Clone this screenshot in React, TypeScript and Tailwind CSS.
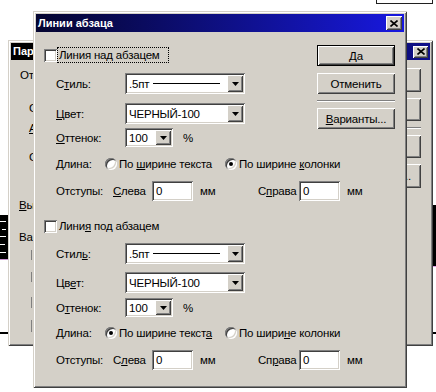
import React from 'react';

const raised =
  'bg-[#d4d0c8] shadow-[inset_1px_1px_#ffffff,inset_-1px_-1px_#404040,inset_2px_2px_#d4d0c8,inset_-2px_-2px_#808080]';
const sunken =
  'bg-white shadow-[inset_1px_1px_#808080,inset_-1px_-1px_#ffffff,inset_2px_2px_#404040,inset_-2px_-2px_#d4d0c8]';
const frame =
  'bg-[#d4d0c8] shadow-[inset_1px_1px_#d4d0c8,inset_-1px_-1px_#404040,inset_2px_2px_#ffffff,inset_-2px_-2px_#808080]';

function U({ children }: { children: React.ReactNode }) {
  return <span className="underline underline-offset-1 decoration-1">{children}</span>;
}

function Arrow() {
  return (
    <svg width="7" height="4" viewBox="0 0 7 4">
      <path d="M0 0h7L3.5 4z" fill="#000" />
    </svg>
  );
}

function CloseBtn({ size }: { size: string }) {
  return (
    <div className={`${size} shrink-0 flex items-center justify-center ${raised}`}>
      <svg width="8" height="7" viewBox="0 0 8 7">
        <path d="M0.5 0.5l7 6M7.5 0.5l-7 6" stroke="#000" strokeWidth="1.6" />
      </svg>
    </div>
  );
}

function Combo({ width, children }: { width: string; children: React.ReactNode }) {
  return (
    <div className={`${width} shrink-0 h-full flex items-stretch p-[2px] ${sunken}`}>
      <div className="flex-1 flex items-center pl-[2px] overflow-hidden whitespace-nowrap">{children}</div>
      <div className={`w-[16px] flex items-center justify-center ${raised}`}>
        <Arrow />
      </div>
    </div>
  );
}

function Radio({ on }: { on: boolean }) {
  return (
    <div className={`w-[12px] h-[12px] shrink-0 rounded-full flex items-center justify-center ${sunken}`}>
      {on && <div className="w-[4px] h-[4px] rounded-full bg-black" />}
    </div>
  );
}

function Field({ value }: { value: string }) {
  return (
    <div className={`w-[41px] h-[20px] shrink-0 flex items-center pl-[4px] ${sunken}`}>{value}</div>
  );
}

type SectionProps = {
  check: React.ReactNode;
  focus?: boolean;
  style: React.ReactNode;
  color: React.ReactNode;
  shade: React.ReactNode;
  opt1: React.ReactNode;
  opt2: React.ReactNode;
  first: boolean;
  left: React.ReactNode;
  right: React.ReactNode;
  gaps: string[];
};

function Section(p: SectionProps) {
  return (
    <>
      <div className={`${p.gaps[0]} h-[20px] flex items-center pl-[8px]`}>
        <div className={`w-[13px] h-[13px] shrink-0 ${sunken}`} />
        <div
          className={`h-[16px] w-[112px] shrink-0 flex items-center pl-[1px] border ${
            p.focus ? 'border-dotted border-black' : 'border-transparent'
          }`}
        >
          <span className="whitespace-nowrap">{p.check}</span>
        </div>
      </div>
      <div className={`${p.gaps[1]} h-[21px] flex items-center pl-[20px]`}>
        <span className="w-[69px] shrink-0">{p.style}</span>
        <Combo width="w-[120px]">
          <span>.5пт</span>
          <span className="ml-[4px] w-[67px] h-px bg-black" />
        </Combo>
      </div>
      <div className={`${p.gaps[2]} h-[21px] flex items-center pl-[20px]`}>
        <span className="w-[69px] shrink-0">{p.color}</span>
        <Combo width="w-[120px]">ЧЕРНЫЙ-100</Combo>
      </div>
      <div className={`${p.gaps[3]} h-[19px] flex items-center pl-[20px]`}>
        <span className="w-[69px] shrink-0">{p.shade}</span>
        <Combo width="w-[48px]">100</Combo>
        <span className="ml-[10px]">%</span>
      </div>
      <div className={`${p.gaps[4]} h-[14px] flex items-center pl-[20px] whitespace-nowrap`}>
        <span className="w-[49px] shrink-0">Длина:</span>
        <div className="w-[120px] shrink-0 flex items-center gap-[2px]">
          <Radio on={p.first} />
          <span>{p.opt1}</span>
        </div>
        <div className="flex items-center gap-[2px] shrink-0">
          <Radio on={!p.first} />
          <span>{p.opt2}</span>
        </div>
      </div>
      <div className={`${p.gaps[5]} h-[20px] flex items-center pl-[20px] whitespace-nowrap`}>
        <span className="w-[57px] shrink-0">Отступы:</span>
        <span className="w-[39px] shrink-0">{p.left}</span>
        <Field value="0" />
        <span className="w-[65px] shrink-0 pl-[7px]">мм</span>
        <span className="w-[41px] shrink-0">{p.right}</span>
        <Field value="0" />
        <span className="pl-[7px]">мм</span>
      </div>
    </>
  );
}

function FrontDialog() {
  return (
    <div className={`absolute left-[33px] top-[11px] w-[374px] h-[377px] p-[3px] flex flex-col ${frame}`}>
      <div className="h-[18px] flex items-center justify-between px-[2px] bg-linear-to-r from-[#050530] to-[#1818e0]">
        <span className="text-white font-bold text-[11px] tracking-normal leading-none">Линии абзаца</span>
        <CloseBtn size="w-[16px] h-[14px]" />
      </div>
      <div className="flex-1 flex">
        <div className="w-[281px] shrink-0 flex flex-col">
          <Section
            check="Линия над абзацем"
            focus
            style={<>С<U>т</U>иль:</>}
            color={<><U>Ц</U>вет:</>}
            shade={<><U>О</U>ттенок:</>}
            opt1={<>По <U>ш</U>ирине текста</>}
            opt2={<>По ширине <U>к</U>олонки</>}
            first={false}
            left={<><U>С</U>лева</>}
            right={<>С<U>п</U>рава</>}
            gaps={['mt-[13px]', 'mt-[8px]', 'mt-[9px]', 'mt-[4px]', 'mt-[10px]', 'mt-[10px]']}
          />
          <Section
            check={<>Лини<U>я</U> под абзацем</>}
            style={<>Стил<U>ь</U>:</>}
            color={<>Цв<U>е</U>т:</>}
            shade={<>О<U>т</U>тенок:</>}
            opt1={<>По ширине текст<U>а</U></>}
            opt2={<>По шири<U>н</U>е колонки</>}
            first
            left={<>С<U>л</U>ева</>}
            right={<>Сп<U>р</U>ава</>}
            gaps={['mt-[15px]', 'mt-[7px]', 'mt-[8px]', 'mt-[5px]', 'mt-[9px]', 'mt-[10px]']}
          />
        </div>
        <div className="w-[78px] shrink-0 flex flex-col">
          <div className={`mt-[13px] h-[21px] border border-black flex items-center justify-center ${raised}`}>Да</div>
          <div className={`mt-[7px] h-[21px] flex items-center justify-center ${raised}`}>Отменить</div>
          <div className="mt-[6px] h-[2px] border-t border-t-[#808080] border-b border-b-white" />
          <div className={`mt-[6px] h-[21px] flex items-center justify-center ${raised}`}>
            <span><U>В</U>арианты...</span>
          </div>
        </div>
      </div>
    </div>
  );
}

function BackDialog() {
  return (
    <div className={`absolute left-[8px] top-[40px] w-[425px] h-[306px] p-[3px] flex flex-col ${frame}`}>
      <div className="h-[17px] flex items-center justify-between px-[2px] bg-linear-to-r from-[#000000] to-[#10108a]">
        <span className="text-white font-bold text-[11px] tracking-normal leading-none">Параметры абзаца</span>
        <CloseBtn size="w-[15px] h-[12px]" />
      </div>
      <div className="flex-1 flex">
        <div className="flex-1 flex flex-col leading-[14px]">
          <span className="mt-[8px] ml-[9px]">Отступ слева:</span>
          <span className="mt-[19px] ml-[18px]">Справа:</span>
          <span className="mt-[6px] ml-[18px]"><U>А</U>бзац:</span>
          <span className="mt-[15px] ml-[18px]">Сверху:</span>
          <span className="mt-[34px] ml-[8px]"><U>В</U>ыключка:</span>
          <span className="mt-[18px] ml-[8px]">Варианты:</span>
          <div className="mt-[6px] ml-[20px] w-px h-[10px] bg-[#808080]" />
          <div className="mt-[12px] ml-[20px] w-px h-[10px] bg-[#808080]" />
          <div className="mt-[15px] ml-[20px] w-px h-[11px] bg-[#808080]" />
          <div className="mt-[12px] ml-[20px] w-px h-[12px] bg-[#808080]" />
        </div>
        <div className="w-[78px] mr-[9px] shrink-0 flex flex-col">
          <div className={`mt-[8px] h-[24px] ${raised}`} />
          <div className={`mt-[6px] h-[23px] ${raised}`} />
          <div className="mt-[6px] h-[2px] border-t border-t-[#808080] border-b border-b-white" />
          <div className={`mt-[6px] h-[23px] ${raised}`} />
          <div className={`mt-[6px] h-[24px] flex items-center justify-end pr-[10px] ${raised}`}>Табуляция...</div>
        </div>
      </div>
    </div>
  );
}

export default function App() {
  return (
    <div className="relative w-[436px] h-[392px] overflow-hidden bg-white font-['Liberation_Sans',Arial,sans-serif] text-[11.5px] tracking-[-0.2px] leading-[14px] text-black select-none">
      {/* document behind the dialogs */}
      <div className="absolute left-[376px] top-[-3px] w-[57px] h-[7px] border border-[#202020] bg-white" />
      <div className="absolute left-0 top-[215px] w-[8px] h-[44px] bg-black flex flex-col justify-around py-[3px]">
        <div className="h-px w-[6px] bg-white" />
        <div className="h-px w-[4px] ml-[2px] bg-white" />
        <div className="h-px w-[6px] bg-white" />
        <div className="h-px w-[5px] bg-white" />
        <div className="h-px w-[6px] bg-white" />
      </div>
      <div className="absolute left-0 top-[259px] w-[8px] h-px bg-[#c890d0]" />
      <div className="absolute left-0 top-[332px] w-[8px] h-[2px] bg-black" />
      <div className="absolute left-[433px] top-[205px] w-[3px] h-[61px] bg-black" />
      <div className="absolute left-[433px] top-[266px] w-[3px] h-px bg-[#e0a0e8]" />
      <div className="absolute left-[433px] top-[332px] w-[3px] h-[2px] bg-black" />
      <BackDialog />
      <FrontDialog />
    </div>
  );
}
